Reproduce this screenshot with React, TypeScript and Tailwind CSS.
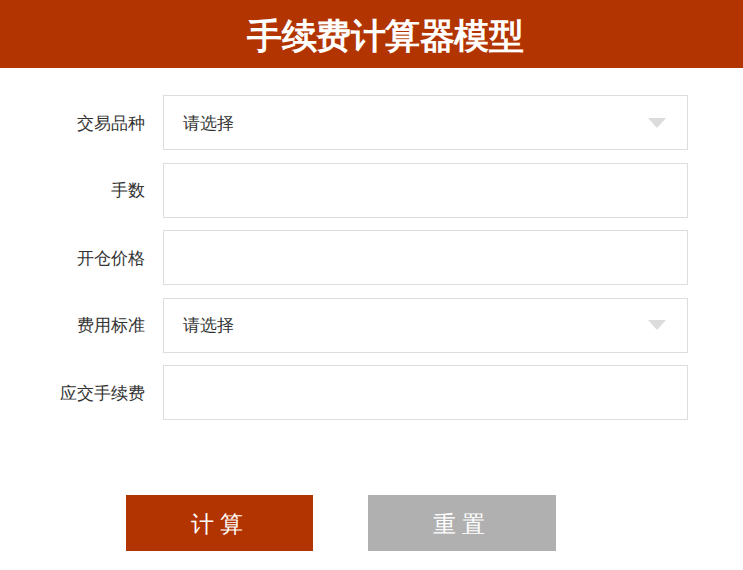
const font = "font-['Noto_Sans_CJK_SC','Noto_Sans',sans-serif]";

const rows = [
  { label: "交易品种", select: true },
  { label: "手数" },
  { label: "开仓价格" },
  { label: "费用标准", select: true },
  { label: "应交手续费" },
];

export default function App() {
  return (
    <div className={`${font} w-[743px] h-[570px] bg-white`}>
      <div className="h-[68px] bg-[#b23400] flex items-center justify-center pl-[27px]">
        <h1 className="text-white text-[35px] font-bold leading-none tracking-[-0.5px]">手续费计算器模型</h1>
      </div>
      <div className="pt-[27px] flex flex-col gap-[12.5px]">
        {rows.map((r) => (
          <div key={r.label} className="flex items-center h-[55px]">
            <label className="w-[145px] text-right text-[17px] text-[#333]">{r.label}</label>
            <div className="ml-[18px] w-[525px] h-[55px] border border-[#dddddd] flex items-center justify-between pl-[19px] pr-[21px]">
              {r.select && (
                <>
                  <span className="text-[17px] text-[#333]">请选择</span>
                  <span className="w-0 h-0 border-l-[9px] border-r-[9px] border-t-[10px] border-l-transparent border-r-transparent border-t-[#dcdcdc]" />
                </>
              )}
            </div>
          </div>
        ))}
      </div>
      <div className="mt-[75px] flex pl-[126px] gap-[55px]">
        <button className="w-[187px] h-[56px] bg-[#b23400] text-white text-[23px] tracking-[6px]">计算</button>
        <button className="w-[188px] h-[56px] bg-[#b0b0b0] text-white text-[23px] tracking-[6px]">重置</button>
      </div>
    </div>
  );
}
